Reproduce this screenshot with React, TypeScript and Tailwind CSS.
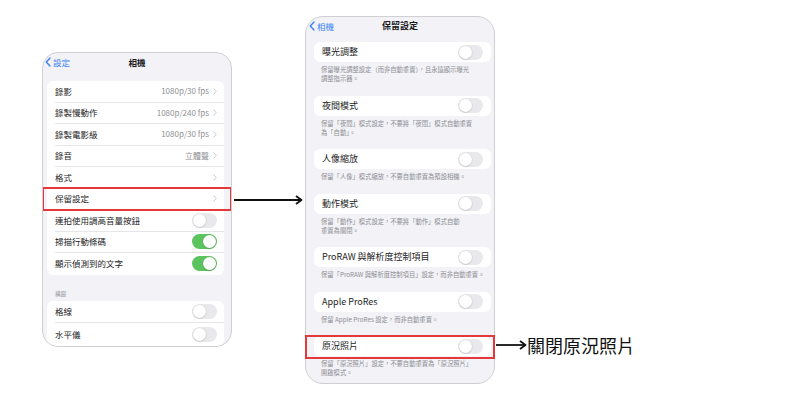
import React from "react";

const cjk = "font-['Noto_Sans_CJK_TC','Noto_Sans',sans-serif]";

function BackChevron() {
  return (
    <svg width="6" height="10" viewBox="0 0 6 10" className="mr-[2px]">
      <path d="M5 1 L1.3 5 L5 9" fill="none" stroke="#3a82f7" strokeWidth="1.4" strokeLinecap="round" strokeLinejoin="round" />
    </svg>
  );
}

function RowChevron() {
  return (
    <svg width="4" height="7" viewBox="0 0 4 7" className="ml-[4px]">
      <path d="M0.8 0.8 L3.2 3.5 L0.8 6.2" fill="none" stroke="#c4c4c8" strokeWidth="0.9" strokeLinecap="round" strokeLinejoin="round" />
    </svg>
  );
}

function Toggle({ on }: { on?: boolean }) {
  return (
    <div
      className={`w-[25px] h-[15px] rounded-full p-[1px] flex ${
        on ? "bg-[#5bc45e] justify-end" : "bg-[#e9e9eb] justify-start"
      }`}
    >
      <div className="w-[13px] h-[13px] rounded-full bg-white shadow-[0_0.5px_1.5px_rgba(0,0,0,0.25)]" />
    </div>
  );
}

function Arrow({ width }: { width: number }) {
  return (
    <svg width={width} height="12" viewBox={`0 0 ${width} 12`}>
      <line x1="0" y1="6" x2={width - 2} y2="6" stroke="#111" strokeWidth="1.8" />
      <path d={`M${width - 7} 2 L${width - 1.5} 6 L${width - 7} 10`} fill="none" stroke="#111" strokeWidth="1.8" strokeLinejoin="round" />
    </svg>
  );
}

type LeftRow = { label: string; value?: string; chevron?: boolean; toggle?: "on" | "off"; marked?: boolean };

const cameraRows: LeftRow[] = [
  { label: "錄影", value: "1080p/30 fps", chevron: true },
  { label: "錄製慢動作", value: "1080p/240 fps", chevron: true },
  { label: "錄製電影級", value: "1080p/30 fps", chevron: true },
  { label: "錄音", value: "立體聲", chevron: true },
  { label: "格式", chevron: true },
  { label: "保留設定", chevron: true, marked: true },
  { label: "連拍使用調高音量按鈕", toggle: "off" },
  { label: "掃描行動條碼", toggle: "on" },
  { label: "顯示偵測到的文字", toggle: "on" },
];

const compRows: LeftRow[] = [
  { label: "格線", toggle: "off" },
  { label: "水平儀", toggle: "off" },
];

function LeftCard({ rows, rowH }: { rows: LeftRow[]; rowH: string }) {
  return (
    <div className="ml-[4px] mr-[7px] bg-white rounded-[6px]">
      {rows.map((r, i) => (
        <div key={r.label} className={`relative ${rowH} flex pl-[8px]`}>
          <div
            className={`flex-1 flex items-center pr-[7px] ${
              i < rows.length - 1 ? "border-b border-[#e6e6ea]" : ""
            }`}
          >
            <span className="flex-1 text-[8.5px] text-[#1c1c1e]">{r.label}</span>
            {r.value && <span className="text-[8px] text-[#8e8e93]">{r.value}</span>}
            {r.chevron && <RowChevron />}
            {r.toggle && <Toggle on={r.toggle === "on"} />}
          </div>
          {r.marked && (
            <div className="absolute top-[-2px] bottom-[-1px] left-[-5px] right-[-8px] border-2 border-[#e5383b]" />
          )}
        </div>
      ))}
    </div>
  );
}

function CameraPhone() {
  return (
    <div className={`ml-[42px] mt-[52px] w-[190px] h-[295px] rounded-[16px] border border-[#cfcfd4] bg-[#f2f2f7] overflow-hidden ${cjk}`}>
      <div className="h-[28px] pt-[4px] px-[2px] grid grid-cols-3 items-start leading-[10px]">
        <div className="flex items-center text-[8.5px] text-[#3a82f7]">
          <BackChevron />
          設定
        </div>
        <div className="text-center text-[8.5px] font-semibold text-[#1c1c1e]">相機</div>
        <div />
      </div>
      <LeftCard rows={cameraRows} rowH="h-[21.5px]" />
      <div className="pt-[16px] pb-[4px] pl-[12px] text-[5.5px] leading-[6px] text-[#8e8e93]">構圖</div>
      <LeftCard rows={compRows} rowH="h-[22.5px]" />
    </div>
  );
}

type Keep = { label: string; desc: string[]; marked?: boolean };

const keepRows: Keep[] = [
  { label: "曝光調整", desc: ["保留曝光調整設定（而非自動重置），且永遠顯示曝光", "調整指示器。"] },
  { label: "夜間模式", desc: ["保留「夜間」模式設定，不要將「夜間」模式自動重置", "為「自動」。"] },
  { label: "人像縮放", desc: ["保留「人像」模式縮放，不要自動重置為預設相機。"] },
  { label: "動作模式", desc: ["保留「動作」模式設定，不要將「動作」模式自動", "重置為關閉。"] },
  { label: "ProRAW 與解析度控制項目", desc: ["保留「ProRAW 與解析度控制項目」設定，而非自動重置。"] },
  { label: "Apple ProRes", desc: ["保留 Apple ProRes 設定，而非自動重置。"] },
  { label: "原況照片", desc: ["保留「原況照片」設定，不要自動重置為「原況照片」", "開啟模式。"], marked: true },
];

function KeepPhone() {
  return (
    <div className={`mt-[16px] w-[190px] h-[368px] rounded-[18px] border border-[#cfcfd4] bg-[#f2f2f7] ${cjk}`}>
      <div className="h-[25px] pt-[4px] px-[3px] grid grid-cols-3 items-start leading-[10px]">
        <div className="flex items-center text-[8.5px] text-[#3a82f7]">
          <BackChevron />
          相機
        </div>
        <div className="text-center text-[9px] font-semibold text-[#1c1c1e] whitespace-nowrap">保留設定</div>
        <div />
      </div>
      {keepRows.map((k) => (
        <div key={k.label} className="ml-[8px] mr-[3px]">
          <div className="relative h-[20px] bg-white rounded-[6px] flex items-center pl-[8px] pr-[8px]">
            <span className="flex-1 text-[9px] text-[#1c1c1e]">{k.label}</span>
            <Toggle />
            {k.marked && (
              <div className="absolute top-[-1px] bottom-[-3px] left-[-9px] right-[-4px] border-2 border-[#e5383b]" />
            )}
          </div>
          <div className="pt-[3px] pb-[12.5px] pl-[7px] text-[6.3px] leading-[9px] text-[#8e8e93] whitespace-nowrap">
            {k.desc.map((d) => (
              <div key={d}>{d}</div>
            ))}
          </div>
        </div>
      ))}
    </div>
  );
}

export default function App() {
  return (
    <div className="w-[800px] h-[400px] bg-white flex items-start">
      <CameraPhone />
      <div className="mt-[194px] ml-[2px] w-[71px]">
        <Arrow width={69} />
      </div>
      <KeepPhone />
      <div className={`mt-[334px] ml-[1px] h-[22px] flex items-center ${cjk}`}>
        <Arrow width={31} />
        <span className="text-[18px] leading-[22px] text-[#111]">關閉原況照片</span>
      </div>
    </div>
  );
}
